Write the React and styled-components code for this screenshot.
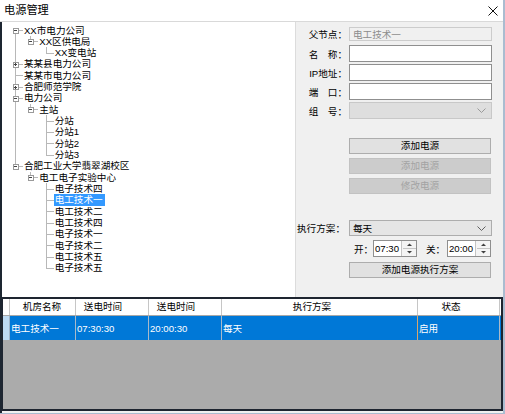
import React from 'react'
import styled, { createGlobalStyle } from 'styled-components'

const FONT = `"Liberation Sans", "Noto Sans CJK SC", "Microsoft YaHei", sans-serif`
const ROW = 11.33
const STEP = 15.4
const LINE_AT = 7.5

const tree = [
  {
    label: 'XX市电力公司',
    open: true,
    children: [{ label: 'XX区供电局', open: true, children: [{ label: 'XX变电站' }] }]
  },
  { label: '某某县电力公司', children: [{ label: '…' }] },
  { label: '某某市电力公司' },
  { label: '合肥师范学院', children: [{ label: '…' }] },
  {
    label: '电力公司',
    open: true,
    children: [
      {
        label: '主站',
        open: true,
        children: [{ label: '分站' }, { label: '分站1' }, { label: '分站2' }, { label: '分站3' }]
      }
    ]
  },
  {
    label: '合肥工业大学翡翠湖校区',
    open: true,
    children: [
      {
        label: '电工电子实验中心',
        open: true,
        children: [
          { label: '电子技术四' },
          { label: '电工技术一', selected: true },
          { label: '电工技术二' },
          { label: '电工技术四' },
          { label: '电子技术一' },
          { label: '电子技术二' },
          { label: '电工技术五' },
          { label: '电子技术五' }
        ]
      }
    ]
  }
]

// walk the tree into visible rows, remembering which ancestor lines run on
const flatten = (nodes, depth = 0, trail = []) =>
  nodes.flatMap((node, i) => {
    const last = i === nodes.length - 1
    const row = { ...node, depth, trail, last, first: depth === 0 && i === 0 }
    const kids = node.children && node.open
      ? flatten(node.children, depth + 1, [...trail, !last])
      : []
    return [row, ...kids]
  })

const columns = [
  { title: '机房名称', width: 66, pad: 1 },
  { title: '送电时间', width: 73, pad: 18 },
  { title: '送电时间', width: 73, pad: 18 },
  { title: '执行方案', width: 196, pad: 15 },
  { title: '状态', width: 82, pad: 15 }
]

const record = ['电工技术一', '07:30:30', '20:00:30', '每天', '启用']

const Chevron = ({ color }) => (
  <svg width='9' height='5' viewBox='0 0 9 5'>
    <polyline points='0.5,0.5 4.5,4.5 8.5,0.5' fill='none' stroke={color} strokeWidth='1' />
  </svg>
)

const SpinArrows = () => (
  <svg width='13' height='15' viewBox='0 0 13 15'>
    <line x1='0' y1='7.5' x2='13' y2='7.5' stroke='#c4c4c4' strokeWidth='1' />
    <polygon points='4,5 6.5,2.5 9,5' fill='#404040' />
    <polygon points='4,10 6.5,12.5 9,10' fill='#404040' />
  </svg>
)

const TimeInput = ({ value }) => (
  <TimeBox>
    <TimeText>{value}</TimeText>
    <Spinner><SpinArrows /></Spinner>
  </TimeBox>
)

export default function App () {
  const rows = flatten(tree)
  return (
    <>
      <GlobalStyle />
      <Window>
        <TitleBar>
          <Title>电源管理</Title>
          <Close>
            <svg width='10' height='10' viewBox='0 0 10 10'>
              <path d='M0.5 0.5 L9.5 9.5 M9.5 0.5 L0.5 9.5' stroke='#111' strokeWidth='1' />
            </svg>
          </Close>
        </TitleBar>
        <Body>
          <Upper>
            <TreePane>
              {rows.map((row, i) => (
                <TreeRow key={i}>
                  {row.trail.map((through, k) => <Guide key={k} $through={through} />)}
                  <Branch $up={!row.first} $down={!row.last}>
                    {row.children && <Expander $open={row.open} />}
                  </Branch>
                  <NodeLabel $selected={row.selected}>{row.label}</NodeLabel>
                </TreeRow>
              ))}
            </TreePane>

            <FormPane>
              <Field $top={5} $h={14}>
                <Label>父节点：</Label>
                <TextBox $disabled>电工技术一</TextBox>
              </Field>
              <Field $top={4}>
                <Label>名　称：</Label>
                <TextBox />
              </Field>
              <Field $top={2}>
                <Label>IP地址：</Label>
                <TextBox />
              </Field>
              <Field $top={2}>
                <Label>端　口：</Label>
                <TextBox />
              </Field>
              <Field $top={2}>
                <Label>组　号：</Label>
                <Select $disabled>
                  <span />
                  <Chevron color='#9a9a9a' />
                </Select>
              </Field>

              <Button $top={19}>添加电源</Button>
              <Button $top={4} disabled>添加电源</Button>
              <Button $top={4} disabled>修改电源</Button>

              <Field $top={26} $h={16}>
                <Label $pad={4}>执行方案：</Label>
                <Select>
                  <span>每天</span>
                  <Chevron color='#606060' />
                </Select>
              </Field>
              <TimeRow>
                <TimeLabel>开：</TimeLabel>
                <TimeInput value='07:30' />
                <TimeLabel $gap={8}>关：</TimeLabel>
                <TimeInput value='20:00' />
              </TimeRow>
              <Button $top={5}>添加电源执行方案</Button>
            </FormPane>
          </Upper>

          <Grid>
            <GridHead>
              <Corner />
              {columns.map((c, i) => (
                <HeadCell key={i} $w={c.width} $pad={c.pad}>{c.title}</HeadCell>
              ))}
            </GridHead>
            <GridRow>
              <RowMark />
              {record.map((v, i) => (
                <Cell key={i} $w={columns[i].width} $edge={i === 3 ? '#d9a56b' : '#a9b9c9'}>{v}</Cell>
              ))}
            </GridRow>
          </Grid>
        </Body>
      </Window>
    </>
  )
}

/*
Styles
 */

const GlobalStyle = createGlobalStyle`
  html, body {
    margin: 0;
    padding: 0;
    background: #f0f0f0;
  }
  body {
    font-family: ${FONT};
    font-size: 9.6px;
    color: #000;
  }
  * {
    box-sizing: border-box;
  }
`

const Window = styled.div`
  width: 505px;
  height: 414px;
  display: flex;
  flex-direction: column;
  background: #f0f0f0;
  border-right: 2px solid #aabcd0;
  border-bottom: 1px solid #aabcd0;
  overflow: hidden;
`

const TitleBar = styled.div`
  height: 22px;
  flex: none;
  display: flex;
  align-items: center;
  padding-left: 4px;
  background: #fff;
  border-bottom: 1px solid #d9d9d9;
`

const Title = styled.span`
  font-size: 11.2px;
  line-height: 1.2;
`

const Close = styled.span`
  margin-left: auto;
  margin-right: 5px;
  display: flex;
`

const Body = styled.div`
  flex: 1;
  display: flex;
  flex-direction: column;
  border-left: 2px solid #1d2631;
`

const Upper = styled.div`
  height: 275px;
  flex: none;
  display: flex;
`

const TreePane = styled.div`
  width: 294px;
  flex: none;
  background: #fff;
  border-right: 1px solid #dcdcdc;
  padding: 2.5px 0 0 5.5px;
  overflow: hidden;
`

const TreeRow = styled.div`
  height: ${ROW}px;
  display: flex;
  align-items: stretch;
`

const Guide = styled.span`
  width: ${STEP}px;
  flex: none;
  position: relative;

  &::before {
    content: '';
    display: ${p => (p.$through ? 'block' : 'none')};
    position: absolute;
    left: ${LINE_AT}px;
    top: 0;
    bottom: 0;
    border-left: 1px solid #b8b8b8;
  }
`

const Branch = styled.span`
  width: ${STEP}px;
  flex: none;
  position: relative;

  &::before {
    content: '';
    position: absolute;
    left: ${LINE_AT}px;
    top: ${p => (p.$up ? '0' : '50%')};
    bottom: ${p => (p.$down ? '0' : '50%')};
    border-left: 1px solid #b8b8b8;
  }

  &::after {
    content: '';
    position: absolute;
    left: ${LINE_AT}px;
    right: 0;
    top: 50%;
    border-top: 1px solid #b8b8b8;
  }
`

const Expander = styled.span`
  position: absolute;
  z-index: 1;
  left: ${LINE_AT - 2.5}px;
  top: calc(50% - 2.5px);
  width: 6px;
  height: 6px;
  background: #fff;
  border: 1px solid #9a9a9a;

  &::before {
    content: '';
    position: absolute;
    left: 0.5px;
    right: 0.5px;
    top: 1.5px;
    border-top: 1px solid #444;
  }

  &::after {
    content: '';
    display: ${p => (p.$open ? 'none' : 'block')};
    position: absolute;
    top: 0.5px;
    bottom: 0.5px;
    left: 1.5px;
    border-left: 1px solid #444;
  }
`

const NodeLabel = styled.span`
  display: block;
  height: ${ROW}px;
  padding: 0 2px 0 1px;
  line-height: ${ROW}px;
  white-space: nowrap;
  background: ${p => (p.$selected ? '#3399ff' : 'transparent')};
  color: ${p => (p.$selected ? '#fff' : '#000')};
`

const FormPane = styled.div`
  flex: 1;
  display: flex;
  flex-direction: column;
  padding: 0 11px 0 0;
`

const Field = styled.div`
  display: flex;
  align-items: center;
  height: ${p => p.$h || 17}px;
  margin-top: ${p => p.$top || 0}px;
`

const Label = styled.span`
  width: 53px;
  flex: none;
  padding-right: ${p => p.$pad || 2}px;
  text-align: right;
  white-space: nowrap;
`

const TextBox = styled.div`
  flex: 1;
  height: 100%;
  padding: 0 3px;
  display: flex;
  align-items: center;
  background: ${p => (p.$disabled ? '#f0f0f0' : '#fff')};
  border: 1px solid ${p => (p.$disabled ? '#cccccc' : '#8f8f8f')};
  color: #8c8c8c;
`

const Select = styled.div`
  flex: 1;
  height: 100%;
  padding: 0 5px 0 3px;
  display: flex;
  align-items: center;
  justify-content: space-between;
  background: ${p => (p.$disabled ? '#dedede' : '#e5e5e5')};
  border: 1px solid ${p => (p.$disabled ? '#c8c8c8' : '#adadad')};
`

const Button = styled.button`
  width: 142px;
  height: 16px;
  margin: ${p => p.$top || 0}px 0 0 53px;
  padding: 0;
  font: inherit;
  line-height: 14px;
  color: #000;
  background: #e1e1e1;
  border: 1px solid #adadad;

  &:disabled {
    color: #a3a3a3;
    background: #cccccc;
    border-color: #c2c2c2;
  }
`

const TimeRow = styled.div`
  display: flex;
  align-items: center;
  height: 17px;
  margin: 4px 0 0 53px;
`

const TimeLabel = styled.span`
  width: ${p => (p.$gap ? 22 : 24)}px;
  margin-left: ${p => p.$gap || 0}px;
  padding-left: ${p => (p.$gap ? 1 : 5)}px;
  flex: none;
  white-space: nowrap;
`

const TimeBox = styled.div`
  width: 44px;
  height: 17px;
  flex: none;
  display: flex;
  align-items: center;
  background: #fff;
  border: 1px solid #8f8f8f;
`

const TimeText = styled.span`
  flex: 1;
  padding-left: 1px;
`

const Spinner = styled.span`
  width: 15px;
  height: 15px;
  display: flex;
  align-items: center;
  justify-content: center;
  border-left: 1px solid #c4c4c4;
  background: #f4f4f4;
`

const Grid = styled.div`
  height: 114px;
  flex: none;
  background: #ababab;
  border: 2px solid #1e2530;
  border-left-width: 1px;
`

const GridHead = styled.div`
  height: 17px;
  display: flex;
  background: #fff;
  border-bottom: 1px solid #a8a8a8;
`

const Corner = styled.span`
  width: 7px;
  flex: none;
  border-right: 1px solid #c6c6c6;
`

const HeadCell = styled.span`
  width: ${p => p.$w}px;
  flex: none;
  padding-right: ${p => p.$pad}px;
  text-align: center;
  line-height: 16px;
  white-space: nowrap;
  border-right: 1px solid #c6c6c6;
`

const GridRow = styled.div`
  height: 24px;
  display: flex;
  background: #0078d7;
`

const RowMark = styled.span`
  width: 7px;
  flex: none;
  background: #bcdaf3;
  border-right: 1px solid #9fb4c8;
`

const Cell = styled.span`
  width: ${p => p.$w}px;
  flex: none;
  padding-left: 1px;
  display: flex;
  align-items: center;
  white-space: nowrap;
  color: #fff;
  border-right: 1px solid ${p => p.$edge};
`
